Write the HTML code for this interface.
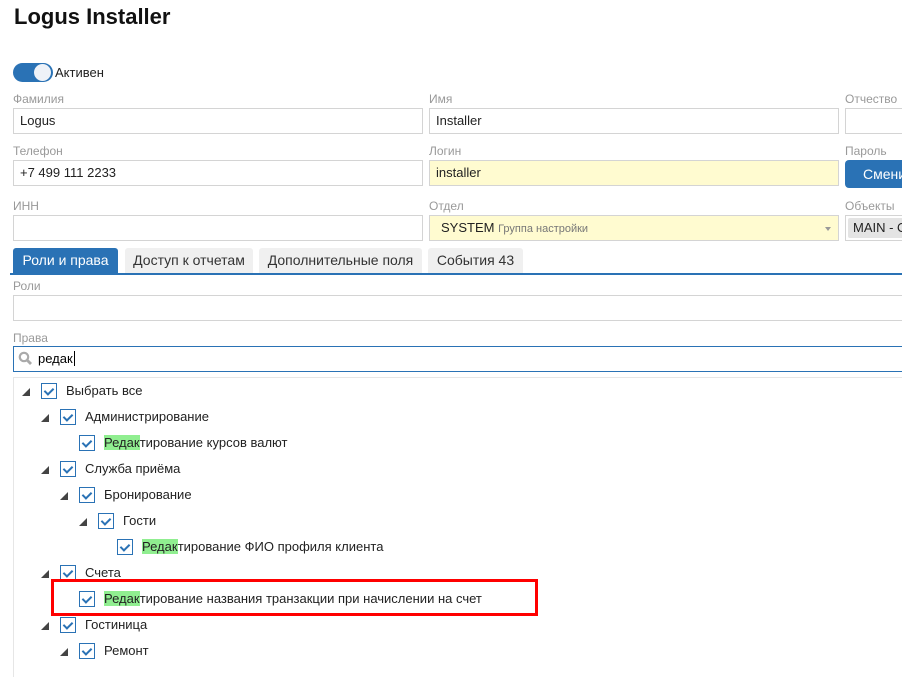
<!DOCTYPE html>
<html><head><meta charset="utf-8"><style>
*{box-sizing:border-box}
body{margin:0;width:902px;height:652px;overflow:hidden;background:#fff;font-family:"Liberation Sans","DejaVu Sans",sans-serif;color:#222;position:relative}
.a{position:absolute}
.lbl{position:absolute;font-size:12px;color:#999}
.inp{position:absolute;border:1px solid #d4d4d4;height:26px;font-size:13px;line-height:24px;padding-left:6px;background:#fff;white-space:nowrap;overflow:hidden}
.tab{position:absolute;top:248px;height:25px;background:#f0f0f0;border-radius:3px 3px 0 0;font-size:14px;line-height:25px;text-align:center;color:#333}
.cb{position:absolute;width:16px;height:16px;border:1px solid #2a72b5;background:#fff}
.cb:after{content:"";position:absolute;left:4px;top:2px;width:4px;height:7px;border:solid #2a72b5;border-width:0 2px 2px 0;transform:rotate(45deg)}
.tri{position:absolute;width:0;height:0;border-left:8px solid transparent;border-bottom:8px solid #444}
.t{position:absolute;font-size:13px;white-space:nowrap}
.hl{background:#90ee90}
</style></head><body>
<div class="a" style="left:14px;top:4px;font-size:22px;font-weight:bold;color:#111">Logus Installer</div>
<div class="a" style="left:13px;top:63px;width:40px;height:19px;border-radius:10px;background:#2a72b5"></div>
<div class="a" style="left:34px;top:64px;width:17px;height:17px;border-radius:50%;background:#eef2f8"></div>
<div class="a" style="left:55px;top:65px;font-size:13px">Активен</div>

<div class="lbl" style="left:13px;top:92px">Фамилия</div>
<div class="inp" style="left:13px;top:108px;width:410px">Logus</div>
<div class="lbl" style="left:429px;top:92px">Имя</div>
<div class="inp" style="left:429px;top:108px;width:410px">Installer</div>
<div class="lbl" style="left:845px;top:92px">Отчество</div>
<div class="inp" style="left:845px;top:108px;width:70px"></div>

<div class="lbl" style="left:13px;top:144px">Телефон</div>
<div class="inp" style="left:13px;top:160px;width:410px">+7 499 111 2233</div>
<div class="lbl" style="left:429px;top:144px">Логин</div>
<div class="inp" style="left:429px;top:160px;width:410px;background:#fffbd0">installer</div>
<div class="lbl" style="left:845px;top:144px">Пароль</div>
<div class="a" style="left:845px;top:160px;width:70px;height:28px;background:#2a72b5;border-radius:4px;color:#fff;font-size:14px;line-height:28px;padding-left:18px">Сменить</div>

<div class="lbl" style="left:13px;top:199px">ИНН</div>
<div class="inp" style="left:13px;top:215px;width:410px"></div>
<div class="lbl" style="left:429px;top:199px">Отдел</div>
<div class="inp" style="left:429px;top:215px;width:410px;background:#fffbd0;padding-left:11px;font-size:13px">SYSTEM <span style="font-size:11px;color:#777">Группа настройки</span></div>
<div class="a" style="left:825px;top:227px;border-left:3px solid transparent;border-right:3px solid transparent;border-top:4px solid #999"></div>
<div class="lbl" style="left:845px;top:199px">Объекты</div>
<div class="inp" style="left:845px;top:215px;width:70px;padding:2px"><span style="display:block;background:#e4e4e4;border-radius:2px;height:20px;line-height:20px;padding-left:5px;font-size:13px;color:#222">MAIN - OL</span></div>

<div class="tab" style="left:13px;width:105px;background:#2a72b5;color:#fff">Роли и права</div>
<div class="tab" style="left:125px;width:128px">Доступ к отчетам</div>
<div class="tab" style="left:259px;width:163px">Дополнительные поля</div>
<div class="tab" style="left:428px;width:95px">События 43</div>
<div class="a" style="left:10px;top:273px;width:892px;height:2px;background:#2a72b5"></div>

<div class="lbl" style="left:13px;top:279px">Роли</div>
<div class="inp" style="left:13px;top:295px;width:900px"></div>
<div class="lbl" style="left:13px;top:331px">Права</div>
<div class="inp" style="left:13px;top:346px;width:900px;border:1px solid #2a72b5;padding-left:24px;color:#000">редак<span style="border-left:1px solid #000;margin-left:1px"></span></div>
<svg class="a" style="left:18px;top:351px" width="15" height="15"><circle cx="6" cy="6" r="4.2" fill="none" stroke="#aaa" stroke-width="2.2"/><line x1="9" y1="9" x2="13" y2="13" stroke="#aaa" stroke-width="2.8"/></svg>

<div class="a" style="left:13px;top:377px;width:900px;height:300px;border:1px solid #e6e6e6;border-right:none;border-bottom:none"></div>

<div class="tri" style="left:22px;top:388px"></div><div class="cb" style="left:41px;top:383px"></div><div class="t" style="left:66px;top:383px">Выбрать все</div>
<div class="tri" style="left:41px;top:414px"></div><div class="cb" style="left:60px;top:409px"></div><div class="t" style="left:85px;top:409px">Администрирование</div>
<div class="cb" style="left:79px;top:435px"></div><div class="t" style="left:104px;top:435px"><span class="hl">Редак</span>тирование курсов валют</div>
<div class="tri" style="left:41px;top:466px"></div><div class="cb" style="left:60px;top:461px"></div><div class="t" style="left:85px;top:461px">Служба приёма</div>
<div class="tri" style="left:60px;top:492px"></div><div class="cb" style="left:79px;top:487px"></div><div class="t" style="left:104px;top:487px">Бронирование</div>
<div class="tri" style="left:79px;top:518px"></div><div class="cb" style="left:98px;top:513px"></div><div class="t" style="left:123px;top:513px">Гости</div>
<div class="cb" style="left:117px;top:539px"></div><div class="t" style="left:142px;top:539px"><span class="hl">Редак</span>тирование ФИО профиля клиента</div>
<div class="tri" style="left:41px;top:570px"></div><div class="cb" style="left:60px;top:565px"></div><div class="t" style="left:85px;top:565px">Счета</div>
<div class="cb" style="left:79px;top:591px"></div><div class="t" style="left:104px;top:591px"><span class="hl">Редак</span>тирование названия транзакции при начислении на счет</div>
<div class="tri" style="left:41px;top:622px"></div><div class="cb" style="left:60px;top:617px"></div><div class="t" style="left:85px;top:617px">Гостиница</div>
<div class="tri" style="left:60px;top:648px"></div><div class="cb" style="left:79px;top:643px"></div><div class="t" style="left:104px;top:643px">Ремонт</div>

<div class="a" style="left:51px;top:579px;width:487px;height:37px;border:3px solid #f00"></div>
</body></html>
